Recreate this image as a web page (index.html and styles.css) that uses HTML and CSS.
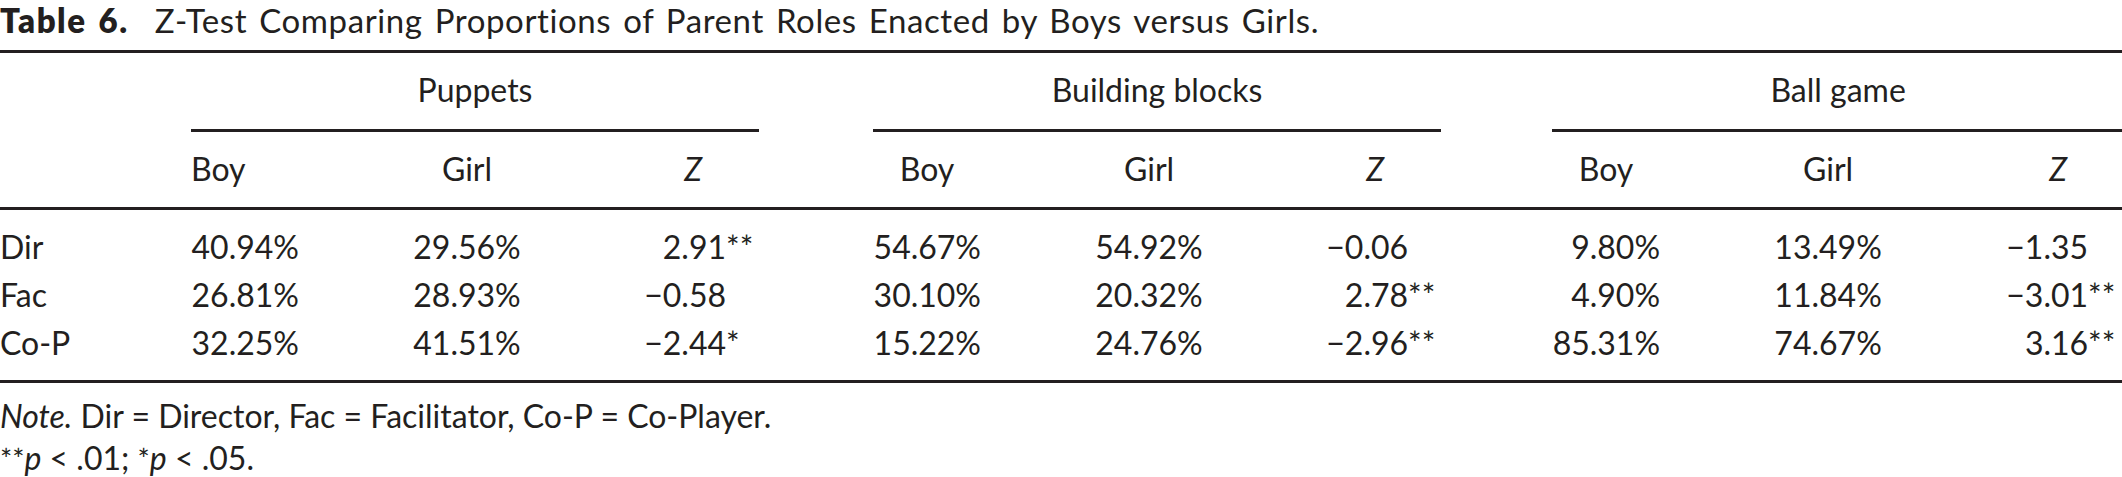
FILE: index.html
```html
<!DOCTYPE html>
<html lang="en">
<head>
<meta charset="utf-8">
<title>Table 6</title>
<link rel="stylesheet" href="styles.css">
</head>
<body>
<div class="page">
  <p class="caption"><span class="caption-label">Table 6.</span> Z-Test Comparing Proportions of Parent Roles Enacted by Boys versus Girls.</p>
  <table class="data">
    <colgroup>
      <col class="c-row">
      <col class="c-boy"><col class="c-pad"><col class="c-girl"><col class="c-z">
      <col class="c-gap1">
      <col class="c-boy"><col class="c-pad"><col class="c-girl"><col class="c-z">
      <col class="c-gap2">
      <col class="c-boy"><col class="c-pad"><col class="c-girl"><col class="c-z3">
    </colgroup>
    <thead>
      <tr class="groups">
        <th></th>
        <th colspan="4" class="group">Puppets</th>
        <th></th>
        <th colspan="4" class="group">Building blocks</th>
        <th></th>
        <th colspan="4" class="group">Ball game</th>
      </tr>
      <tr class="subs">
        <th></th>
        <th class="h-boy h-boy-left">Boy</th><th></th><th class="h-girl">Girl</th><th class="h-z"><em>Z</em></th>
        <th></th>
        <th class="h-boy">Boy</th><th></th><th class="h-girl">Girl</th><th class="h-z"><em>Z</em></th>
        <th></th>
        <th class="h-boy">Boy</th><th></th><th class="h-girl">Girl</th><th class="h-z"><em>Z</em></th>
      </tr>
    </thead>
    <tbody>
      <tr class="first">
        <td class="lbl">Dir</td>
        <td class="boy">40.94%</td><td></td><td class="girl">29.56%</td><td class="z">2.91<span class="sig">**</span></td>
        <td></td>
        <td class="boy">54.67%</td><td></td><td class="girl">54.92%</td><td class="z">&minus;0.06</td>
        <td></td>
        <td class="boy">9.80%</td><td></td><td class="girl">13.49%</td><td class="z z3">&minus;1.35</td>
      </tr>
      <tr>
        <td class="lbl">Fac</td>
        <td class="boy">26.81%</td><td></td><td class="girl">28.93%</td><td class="z">&minus;0.58</td>
        <td></td>
        <td class="boy">30.10%</td><td></td><td class="girl">20.32%</td><td class="z">2.78<span class="sig">**</span></td>
        <td></td>
        <td class="boy">4.90%</td><td></td><td class="girl">11.84%</td><td class="z z3">&minus;3.01<span class="sig">**</span></td>
      </tr>
      <tr class="last">
        <td class="lbl">Co-P</td>
        <td class="boy">32.25%</td><td></td><td class="girl">41.51%</td><td class="z">&minus;2.44<span class="sig">*</span></td>
        <td></td>
        <td class="boy">15.22%</td><td></td><td class="girl">24.76%</td><td class="z">&minus;2.96<span class="sig">**</span></td>
        <td></td>
        <td class="boy">85.31%</td><td></td><td class="girl">74.67%</td><td class="z z3">3.16<span class="sig">**</span></td>
      </tr>
    </tbody>
  </table>
  <div class="notes">
    <p class="note"><em>Note.</em> Dir = Director, Fac = Facilitator, Co-P = Co-Player.</p>
    <p class="note"><span class="star">**</span><em>p</em> &lt; .01; <span class="star">*</span><em>p</em> &lt; .05.</p>
  </div>
</div>
</body>
</html>
```

FILE: styles.css
```css
html, body {
  margin: 0;
  padding: 0;
  background: #ffffff;
}

body {
  font-family: "Lato", "Open Sans", "Liberation Sans", sans-serif;
  font-size: 32px;
  color: #231f20;
  width: 2122px;
  height: 477px;
  overflow: hidden;
}

.page {
  width: 2122px;
}

.caption {
  margin: 0;
  font-size: 33px;
  line-height: 40px;
  letter-spacing: 0.6px;
  word-spacing: 3px;
  white-space: nowrap;
}

.caption-label {
  font-weight: 800;
  letter-spacing: 1.5px;
  margin-right: 14px;
}

.data {
  margin-top: 10px;
  width: 2122px;
  table-layout: fixed;
  border-collapse: separate;
  border-spacing: 0;
  border-top: 3px solid #231f20;
}

.c-row { width: 191px; }
.c-boy { width: 108px; }
.c-pad { width: 60px; }
.c-girl { width: 216px; }
.c-z { width: 184px; }
.c-gap1 { width: 114px; }
.c-gap2 { width: 111px; }
.c-z3 { width: 188px; }

.data th,
.data td {
  padding: 0;
  font-weight: 400;
  white-space: nowrap;
}

.groups th {
  padding-top: 21px;
  padding-bottom: 23px;
  line-height: 32px;
  border-bottom: 3px solid transparent;
}

.groups th.group {
  text-align: center;
  border-bottom-color: #231f20;
}

.subs th {
  padding-top: 21px;
  padding-bottom: 22px;
  line-height: 32px;
  border-bottom: 3px solid #231f20;
}

.h-boy { text-align: center; }
.h-boy-left { text-align: left; }
.h-girl { text-align: center; }
.subs th.h-z {
  text-align: right;
  padding-right: 57px;
}

.data em { font-style: italic; }

.data td {
  line-height: 48px;
}

.data tr.first td { padding-top: 13px; }
.data tr.last td {
  padding-bottom: 13px;
  border-bottom: 3px solid #231f20;
}

.lbl { text-align: left; }
.boy { text-align: right; }
.girl { text-align: center; }
.data td.z {
  text-align: right;
  padding-right: 33px;
}
.data td.z.z3 { padding-right: 36px; }

.sig {
  display: inline-block;
  width: 0;
  white-space: nowrap;
  text-align: left;
}

.notes {
  margin-top: 12px;
}

.note {
  margin: 0;
  line-height: 42px;
  white-space: nowrap;
}

.star {
  font-size: 0.9em;
}
```
